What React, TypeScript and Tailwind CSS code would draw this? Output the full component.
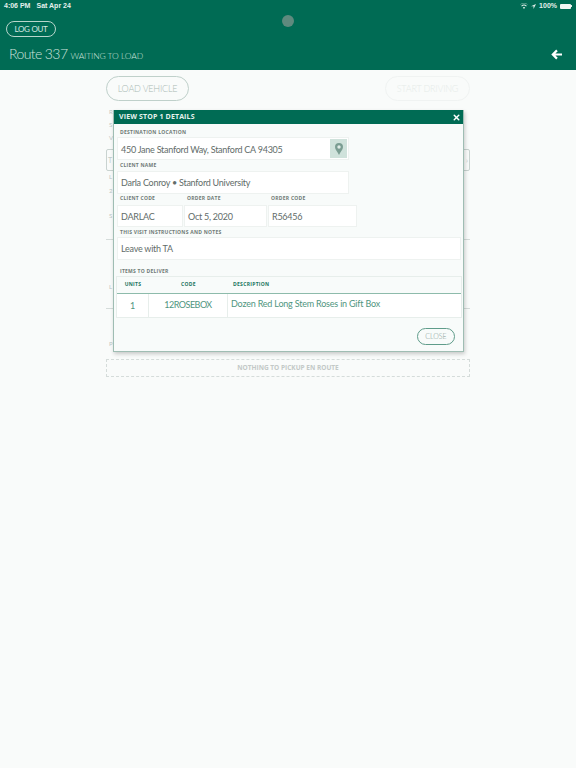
import { X } from 'lucide-react';

const Label = ({ children, className = '' }: { children: React.ReactNode; className?: string }) => (
  <div className={`text-[5px] leading-[8px] font-bold tracking-[0.05em] text-[#6f7a76] font-['Open_Sans',sans-serif] ${className}`}>{children}</div>
);

const Field = ({ children, className = '' }: { children?: React.ReactNode; className?: string }) => (
  <div className={`bg-white border border-[#eef2f0] text-[9px] tracking-[-0.25px] text-[#626c69] flex items-center px-[3px] ${className}`}>{children}</div>
);

const Ghost = ({ children, className = '' }: { children: React.ReactNode; className?: string }) => (
  <div className={`text-[6px] leading-[6px] pl-[3px] text-[#bcc6c3] ${className}`}>{children}</div>
);

const StatusBar = () => (
  <div className="flex items-center justify-between h-[12px] pl-1 pr-[4px] text-[7px] font-semibold text-[#e4f0ec] font-['Liberation_Sans',sans-serif]">
    <div className="flex gap-[6px]">
      <span>4:06 PM</span>
      <span>Sat Apr 24</span>
    </div>
    <div className="flex items-center gap-[3px]">
      <svg width="8" height="6" viewBox="0 0 16 12" fill="#e4f0ec">
        <path d="M8 12 5.600 9.200a3.400 3.400 0 0 1 4.800 0zM3.800 7.200a6 6 0 0 1 8.400 0l1.400-1.600a8.200 8.200 0 0 0-11.200 0zM.2 3.600a11 11 0 0 1 15.600 0L14.400 2A13 13 0 0 0 1.600 2z" />
      </svg>
      <svg width="5" height="5" viewBox="0 0 10 10" fill="#e4f0ec">
        <path d="M10 0 0 4.600h5V10z" />
      </svg>
      <span>100%</span>
      <div className="flex items-center">
        <div className="w-[11px] h-[5px] bg-[#f2f7f5] rounded-[1px]" />
        <div className="w-px h-[2px] bg-[#e4f0ec]" />
      </div>
    </div>
  </div>
);

const App = () => {
  return (
    <div className="relative w-[576px] h-[768px] overflow-hidden bg-[#f9fbfa] font-['Lato',sans-serif]">
      {/* Header */}
      <header className="h-[70px] bg-[#006b54] flex flex-col">
        <StatusBar />
        <div className="pl-[6px] pt-[2px]">
          <button className="w-[50px] h-[16px] rounded-full border border-[#b9d6cc] text-[8px] tracking-[-0.3px] leading-none text-[#d6e8e2]">LOG OUT</button>
        </div>
        <div className="flex items-center justify-between pl-[9px] pr-[14px] mt-[6px]">
          <div className="flex items-baseline gap-[3px] text-[#cfe3dc]">
            <span className="text-[14px] tracking-[-0.6px] leading-[20px] font-light">Route 337</span>
            <span className="text-[8.5px] tracking-[-0.1px] font-light">WAITING TO LOAD</span>
          </div>
          <svg width="11" height="11" viewBox="0 0 12 12" fill="none" stroke="#ffffff" strokeWidth="2.400">
            <path d="M6.500 1.500 2 6l4.500 4.500M2.500 6H12" />
          </svg>
        </div>
      </header>

      {/* Page behind the dialog */}
      <main className="w-[364px] ml-[106px] mt-[6px]">
        <div className="flex justify-between">
          <button className="w-[83px] h-[25px] rounded-full border border-[#bfd0ca] text-[9px] tracking-[-0.2px] font-light text-[#a9bab4]">LOAD VEHICLE</button>
          <button className="w-[85px] h-[25px] rounded-full border border-[#f0f3f2] text-[9px] tracking-[-0.2px] font-light text-[#e6ebe9]">START DRIVING</button>
        </div>
        <div className="h-[48px] pt-[8px] flex flex-col gap-[7px]">
          <Ghost>R</Ghost>
          <Ghost>S</Ghost>
          <Ghost>V</Ghost>
        </div>
        <div className="h-[22px] border border-[#c9d3d0] rounded-[2px] w-full flex items-center justify-between px-[1px] text-[7px] text-[#c3ccc9]">
          <span>T</span>
          <span>›</span>
        </div>
        <div className="h-[68px] pt-[3px] flex flex-col gap-[8px]">
          <Ghost>L</Ghost>
          <Ghost>2</Ghost>
          <Ghost className="mt-[11px]">S</Ghost>
        </div>
        <div className="h-[70px] border-y border-[#d5dcda] pt-[44px]">
          <Ghost>L</Ghost>
        </div>
        <div className="h-[50px] pt-[32px]">
          <Ghost>P</Ghost>
        </div>
        <div className="h-[18px] border border-dashed border-[#d5dcda] flex items-center justify-center text-[6.5px] font-bold text-[#c3c9c7] font-['Open_Sans',sans-serif]">
          NOTHING TO PICKUP EN ROUTE
        </div>
      </main>

      {/* Dialog */}
      <div className="absolute left-[113px] top-[110px] w-[351px] h-[242px] bg-[#f8fbfa] border-b border-x border-[#9fbdb3] shadow-[1px_2px_4px_rgba(0,0,0,0.2)]">
        <div className="h-[14px] bg-[#006b54] flex items-center justify-between pl-[5px] pr-[2px]">
          <span className="text-[7px] font-bold text-[#e6f2ee] tracking-[0.02em] font-['Open_Sans',sans-serif]">VIEW STOP 1 DETAILS</span>
          <X size={9} strokeWidth={4} className="text-white" />
        </div>
        <div className="pl-[3px] pr-[2px]">
          <Label className="pl-[3px] pt-[4px]">DESTINATION LOCATION</Label>
          <Field className="w-[232px] h-[23px] mt-px justify-between pr-[1px]">
            <span className="pt-[3px]">450 Jane Stanford Way, Stanford CA 94305</span>
            <div className="w-[17px] h-[19px] bg-[#cfe2db] flex items-center justify-center">
              <svg width="8" height="12" viewBox="0 0 8 12">
                <path d="M4 0a4 4 0 0 0-4 4c0 2.600 2.600 5 4 8 1.400-3 4-5.400 4-8a4 4 0 0 0-4-4z" fill="#7a9d92" />
                <circle cx="4" cy="4" r="1.700" fill="#dfece7" />
              </svg>
            </div>
          </Field>
          <Label className="pl-[3px] pt-[1px]">CLIENT NAME</Label>
          <Field className="w-[232px] h-[23px] mt-[2px]">Darla Conroy • Stanford University</Field>
          <div className="flex gap-px">
            <div className="w-[66px]">
              <Label className="pl-[3px]">CLIENT CODE</Label>
              <Field className="h-[22px] mt-[3px] pt-[1px] tracking-[-0.5px]">DARLAC</Field>
            </div>
            <div className="w-[83px]">
              <Label className="pl-[3px]">ORDER DATE</Label>
              <Field className="h-[22px] mt-[3px] pt-[1px]">Oct 5, 2020</Field>
            </div>
            <div className="w-[89px]">
              <Label className="pl-[3px]">ORDER CODE</Label>
              <Field className="h-[22px] mt-[3px] pt-[1px] tracking-[-0.5px]">R56456</Field>
            </div>
          </div>
          <Label className="pl-[3px] pt-[1px]">THIS VISIT INSTRUCTIONS AND NOTES</Label>
          <Field className="w-[344px] h-[23px] mt-[1px] pt-[1px]">Leave with TA</Field>
          <Label className="pl-[3px] pt-[7px]">ITEMS TO DELIVER</Label>
          <div className="w-[346px] mt-[1px] -ml-px border border-[#e7eeeb]">
            <div className="flex h-[17px] items-center border-b border-[#8dbbab] text-[5px] font-bold tracking-[0.06em] text-[#18745e] font-['Open_Sans',sans-serif]">
              <div className="w-[32px] text-center">UNITS</div>
              <div className="w-[79px] text-center">CODE</div>
              <div className="pl-[5px]">DESCRIPTION</div>
            </div>
            <div className="flex h-[23px] bg-white items-center text-[9px] tracking-[-0.2px] text-[#4f9580]">
              <div className="w-[32px] h-full flex items-center justify-center border-r border-[#e7eeeb]">1</div>
              <div className="w-[79px] h-full flex items-center justify-center border-r border-[#e7eeeb] tracking-[-0.5px] pb-[2px]">12ROSEBOX</div>
              <div className="pl-[3px] pb-[3px]">Dozen Red Long Stem Roses in Gift Box</div>
            </div>
          </div>
          <div className="flex justify-end pr-[6px] mt-[10px]">
            <button className="w-[38px] h-[17px] rounded-full border border-[#5f9c8a] text-[7px] font-light text-[#7f9a92]">CLOSE</button>
          </div>
        </div>
      </div>

      {/* Home indicator dot */}
      <div className="absolute left-[282px] top-[15px] w-[12px] h-[12px] rounded-full bg-[#5f8a7e]" />
    </div>
  );
};

export default App;
